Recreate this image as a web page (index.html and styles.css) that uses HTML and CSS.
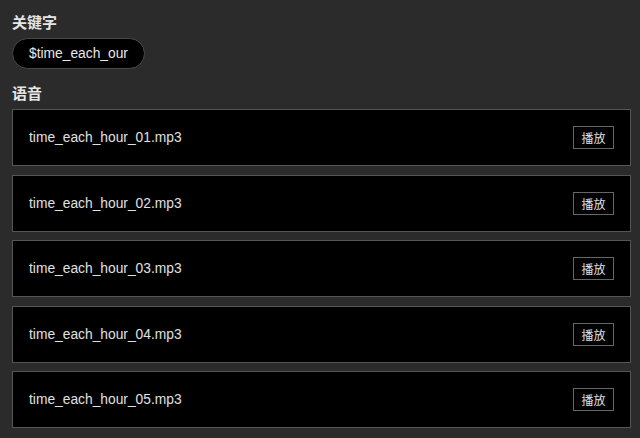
FILE: index.html
```html
<!DOCTYPE html>
<html lang="zh">
<head>
<meta charset="utf-8">
<link rel="stylesheet" href="styles.css">
</head>
<body>
<div class="page">
  <h2 class="section-title">关键字</h2>
  <div class="keyword-pill">$time_each_our</div>
  <h2 class="section-title second">语音</h2>
  <div class="voice-list">
    <div class="voice-row"><span class="voice-name">time_each_hour_01.mp3</span><button class="play-btn">播放</button></div>
    <div class="voice-row"><span class="voice-name">time_each_hour_02.mp3</span><button class="play-btn">播放</button></div>
    <div class="voice-row"><span class="voice-name">time_each_hour_03.mp3</span><button class="play-btn">播放</button></div>
    <div class="voice-row"><span class="voice-name">time_each_hour_04.mp3</span><button class="play-btn">播放</button></div>
    <div class="voice-row"><span class="voice-name">time_each_hour_05.mp3</span><button class="play-btn">播放</button></div>
  </div>
</div>
</body>
</html>
```
FILE: styles.css
```css
html, body {
  margin: 0;
  padding: 0;
  background: #2b2b2b;
  height: 100%;
  overflow: hidden;
}
body {
  font-family: "Liberation Sans", "Noto Sans CJK SC", sans-serif;
  color: #e2e2e2;
}
.page {
  padding: 12px 9px 0 12px;
  display: flex;
  flex-direction: column;
  align-items: flex-start;
}
.section-title {
  margin: 0;
  font-size: 15px;
  font-weight: bold;
  line-height: 20px;
  color: #e6e6e6;
  font-family: "Noto Sans CJK SC", sans-serif;
}
.section-title.second {
  margin-top: 14px;
}
.keyword-pill {
  margin-top: 6px;
  box-sizing: border-box;
  height: 31px;
  padding: 0 16px;
  display: flex;
  align-items: center;
  background: #000;
  border: 1px solid #4a4a4a;
  border-radius: 16px;
  font-size: 13.8px;
  color: #e8e8e8;
}
.voice-list {
  margin-top: 6px;
  align-self: stretch;
  display: flex;
  flex-direction: column;
  gap: 8.5px;
}
.voice-row {
  box-sizing: border-box;
  height: 57px;
  display: flex;
  align-items: center;
  justify-content: space-between;
  padding: 0 16px;
  background: #000;
  border: 1px solid #555;
}
.voice-name {
  font-size: 13.8px;
  color: #e0e0e0;
}
.play-btn {
  box-sizing: border-box;
  width: 41px;
  height: 23px;
  padding: 0;
  background: #000;
  border: 1px solid #666;
  border-radius: 0;
  color: #e0e0e0;
  font-family: "Noto Sans CJK SC", sans-serif;
  font-size: 12px;
  line-height: 21px;
}
```
